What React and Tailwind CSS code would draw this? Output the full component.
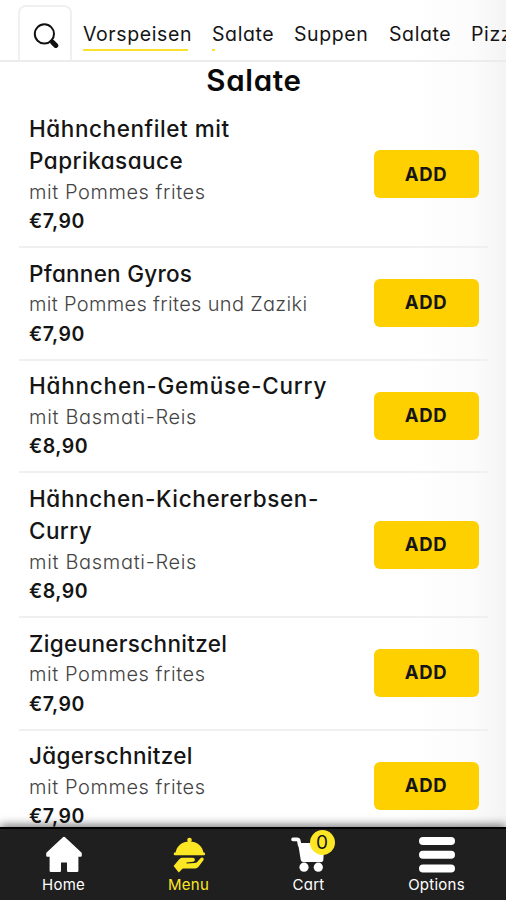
import React from 'react'

const tabs = [
  { label: 'Vorspeisen', style: 'ml-[11px] w-[109px]', line: 'w-[105px]' },
  { label: 'Salate', style: 'ml-[20px] w-[62px]', line: 'w-[3px]' },
  { label: 'Suppen', style: 'ml-[20px] w-[75px]' },
  { label: 'Salate', style: 'ml-[20px] w-[62px]' },
  { label: 'Pizza', style: 'ml-[20px] w-[60px]' },
]

const pommes = { text: 'mit Pommes frites', style: 'tracking-[0.56px]' }
const pommesZaziki = { text: 'mit Pommes frites und Zaziki', style: 'tracking-[0.33px]' }
const reis = { text: 'mit Basmati-Reis', style: 'tracking-[0.68px]' }

const dishes = [
  {
    name: [
      { text: 'Hähnchenfilet mit', style: 'tracking-[0.57px]' },
      { text: 'Paprikasauce', style: 'tracking-[0.48px]' },
    ],
    info: pommes,
    price: '€7,90',
  },
  { name: [{ text: 'Pfannen Gyros', style: 'tracking-[0.26px]' }], info: pommesZaziki, price: '€7,90' },
  { name: [{ text: 'Hähnchen-Gemüse-Curry', style: 'tracking-[0.78px]' }], info: reis, price: '€8,90' },
  {
    name: [
      { text: 'Hähnchen-Kichererbsen-', style: 'tracking-[0.62px]' },
      { text: 'Curry', style: 'tracking-[0.4px]' },
    ],
    info: reis,
    price: '€8,90',
  },
  { name: [{ text: 'Zigeunerschnitzel', style: 'tracking-[0.32px]' }], info: pommes, price: '€7,90' },
  { name: [{ text: 'Jägerschnitzel', style: 'tracking-[0.32px]' }], info: pommes, price: '€7,90' },
]

function SearchIcon() {
  return (
    <svg width="26" height="26" viewBox="0 0 26 26" fill="none" stroke="#111">
      <circle cx="11.4" cy="10.9" r="9.6" strokeWidth="2" />
      <path d="M17.5 17l3 3" strokeWidth="2.4" />
      <path d="M19.8 19.4l3 3" strokeWidth="5" strokeLinecap="round" />
    </svg>
  )
}

function HomeIcon() {
  return (
    <svg width="36" height="37" viewBox="0 0 36 37" fill="#fff" stroke="#fff" strokeWidth="2.4" strokeLinejoin="round">
      <path d="M18 2L1.4 17.4v2.2h3.4v15.2h9V25.2h8.4v9.6h9V19.6h3.4v-2.2z" />
    </svg>
  )
}

function MenuIcon() {
  return (
    <svg width="32" height="36" viewBox="0 0 32 36" fill="#fde725">
      <circle cx="16.5" cy="3" r="2.3" />
      <path d="M2.4 16.6C3.2 9 9 4.4 16.5 4.4s13.3 4.6 14.1 12.2z" />
      <rect x="0.8" y="15.6" width="31.2" height="2.6" rx="1" />
      <path d="M0.6 29L6 22.4c1.2-1.3 2.5-1.7 4.2-1.7h9.5c2.8 0 3 3.6.4 4l-6.6.7v1.1l8.3-.5c1.4-.1 2.2-.7 3-1.7l2.7-3.1c1.7-1.6 4.1.1 2.9 2l-4.7 6.2c-1.2 1.5-2.4 2.1-4.5 2.1H11.4c-1.6 0-2.3.4-3.2 1.4l-2.4 2.7z" />
    </svg>
  )
}

function CartIcon() {
  return (
    <svg width="36" height="37" viewBox="0 0 36 37" fill="#fff">
      <path d="M2 3.4h4c1.1 0 1.7.6 1.9 1.7L8.6 9" fill="none" stroke="#fff" strokeWidth="3.6" strokeLinecap="round" />
      <path d="M7 7h26.5l-1.2 17c-.2 1.4-.9 2-2.3 2H12.4c-1.5 0-2.4-.8-2.7-2.2z" />
      <circle cx="13" cy="31.2" r="4.6" />
      <circle cx="27.3" cy="31.2" r="4.6" />
    </svg>
  )
}

function OptionsIcon() {
  return (
    <svg width="36" height="37" viewBox="0 0 36 37" fill="#fff">
      <rect x="0" y="1" width="36" height="8" rx="4" />
      <rect x="0" y="14.8" width="36" height="8" rx="4" />
      <rect x="0" y="28.6" width="36" height="8" rx="4" />
    </svg>
  )
}

function Dish({ dish }) {
  return (
    <div className="mr-[18px] ml-[19px] flex items-center justify-between border-b-2 border-[#f0f0f0] pt-[9.7px] pr-[9.5px] pb-[9.8px] pl-[10px]">
      <div className="whitespace-nowrap">
        {dish.name.map((line) => (
          <div key={line.text} className={`text-[22.5px] leading-[32.6px] font-medium text-[#151515] ${line.style}`}>
            {line.text}
          </div>
        ))}
        <div className={`text-[20px] leading-[29.2px] font-light text-[#444] ${dish.info.style}`}>
          {dish.info.text}
        </div>
        <div className="text-[19.5px] leading-[29.2px] font-semibold tracking-[0.5px] text-[#151515]">
          {dish.price}
        </div>
      </div>
      <button className="h-12 w-[105px] shrink-0 rounded-md bg-[#ffd000] text-[18.5px] font-bold tracking-[0.6px] text-[#151515]">
        ADD
      </button>
    </div>
  )
}

function NavItem({ label, icon, className }) {
  return (
    <div className={`flex flex-col items-center ${className}`}>
      <div className="flex h-[37px] items-center">{icon}</div>
      <div className="mt-[1.5px] text-[15px] leading-[20px] tracking-[0.25px]">{label}</div>
    </div>
  )
}

export default function App() {
  return (
    <div className="flex h-[900px] w-[506px] flex-col overflow-hidden bg-[linear-gradient(to_right,#fff_410px,#fbfbfb_475px,#f4f4f4_506px)] font-['Inter','Noto_Sans',sans-serif] [font-feature-settings:'cv11']">
      {/* Category tabs */}
      <div className="flex h-[62px] shrink-0 items-end overflow-hidden border-b-2 border-[#ececec] pl-[18px]">
        <button className="flex h-[55px] w-[54px] shrink-0 items-center justify-center rounded-t-lg border-2 border-b-0 border-[#f0f0f0] pt-[5px] pl-[1px]">
          <SearchIcon />
        </button>
        {tabs.map((tab, i) => (
          <div key={i} className={`flex h-[43px] shrink-0 flex-col whitespace-nowrap ${tab.style}`}>
            <div className="h-[32px] text-[19.5px] leading-[34px] tracking-[0.6px] text-[#151515]">{tab.label}</div>
            {tab.line && <div className={`h-[2px] bg-[#fde02b] ${tab.line}`} />}
          </div>
        ))}
      </div>

      {/* Dishes */}
      <div className="min-h-0 flex-1 overflow-hidden">
        <h1 className="h-[41px] pl-[2px] text-center text-[29.5px] leading-[37px] font-semibold tracking-[0.7px] text-[#0a0a0a]">
          Salate
        </h1>
        {dishes.map((dish) => (
          <Dish key={dish.name[0].text} dish={dish} />
        ))}
      </div>

      {/* Bottom navigation */}
      <nav className="relative flex h-[73px] shrink-0 border-t-2 border-black bg-[#1f1f1f] pt-[7px] text-white shadow-[0_-2px_9px_rgba(0,0,0,0.55)]">
        <NavItem label="Home" icon={<HomeIcon />} className="w-[127px]" />
        <NavItem label="Menu" icon={<MenuIcon />} className="w-[123px] text-[#fde725]" />
        <NavItem
          label="Cart"
          className="w-[117px]"
          icon={
            <div className="relative">
              <CartIcon />
              <span className="absolute -top-[6px] left-[19px] flex size-[25px] items-center justify-center rounded-full bg-[#fde725] pt-[2px] text-[19px] text-[#151515]">
                0
              </span>
            </div>
          }
        />
        <NavItem label="Options" icon={<OptionsIcon />} className="w-[139px]" />
      </nav>
    </div>
  )
}
